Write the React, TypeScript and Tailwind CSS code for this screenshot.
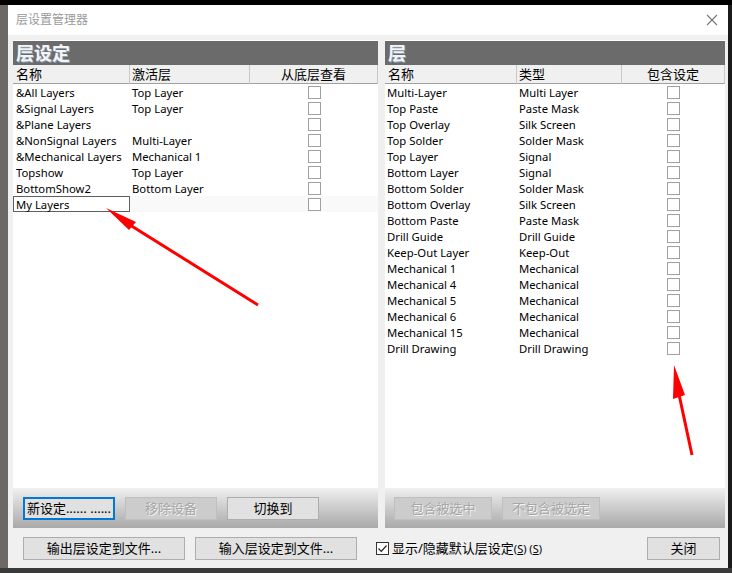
import React from "react";

const leftRows: [string, string][] = [
  ["&All Layers", "Top Layer"],
  ["&Signal Layers", "Top Layer"],
  ["&Plane Layers", ""],
  ["&NonSignal Layers", "Multi-Layer"],
  ["&Mechanical Layers", "Mechanical 1"],
  ["Topshow", "Top Layer"],
  ["BottomShow2", "Bottom Layer"],
];

const rightRows: [string, string][] = [
  ["Multi-Layer", "Multi Layer"],
  ["Top Paste", "Paste Mask"],
  ["Top Overlay", "Silk Screen"],
  ["Top Solder", "Solder Mask"],
  ["Top Layer", "Signal"],
  ["Bottom Layer", "Signal"],
  ["Bottom Solder", "Solder Mask"],
  ["Bottom Overlay", "Silk Screen"],
  ["Bottom Paste", "Paste Mask"],
  ["Drill Guide", "Drill Guide"],
  ["Keep-Out Layer", "Keep-Out"],
  ["Mechanical 1", "Mechanical"],
  ["Mechanical 4", "Mechanical"],
  ["Mechanical 5", "Mechanical"],
  ["Mechanical 6", "Mechanical"],
  ["Mechanical 15", "Mechanical"],
  ["Drill Drawing", "Drill Drawing"],
];

const font = { fontFamily: '"Noto Sans", "Noto Sans CJK SC", sans-serif' };

const Box = () => (
  <div className="w-[13px] h-[13px] border border-[#a0a0a0] bg-white" />
);

const Btn = ({
  label,
  w,
  disabled,
  focused,
}: {
  label: string;
  w: string;
  disabled?: boolean;
  focused?: boolean;
}) => (
  <div
    className={
      "h-[23px] flex items-center justify-center text-[13px] " +
      w +
      (focused
        ? " border-2 border-[#0078d7] bg-[#e1e1e1] text-black"
        : disabled
        ? " border border-[#bfbfbf] bg-[#cccccc] text-[#a6a6a6] [text-shadow:1px_1px_0_#f4f4f4]"
        : " border border-[#adadad] bg-[#e1e1e1] text-black")
    }
  >
    {label}
  </div>
);

const ColHead = ({ cols, grid }: { cols: string[]; grid: string }) => (
  <div
    className={
      "grid h-[19px] bg-[#f0f0f0] border-b border-[#a0a0a0] border-r border-r-[#c8c8c8] text-[13px] leading-[19px] text-black " +
      grid
    }
  >
    <div className="pl-[3px] border-r border-[#c8c8c8] whitespace-nowrap overflow-hidden">{cols[0]}</div>
    <div className="pl-[2px] border-r border-[#c8c8c8] whitespace-nowrap overflow-hidden">{cols[1]}</div>
    <div className="text-center whitespace-nowrap">{cols[2]}</div>
  </div>
);

const App = () => {
  return (
    <div className="relative w-[732px] h-[573px] bg-[#1b1b1b] flex flex-col overflow-hidden" style={font}>
      <div className="h-[5px] bg-black" />
      <div className="flex flex-1">
        <div className="w-[8px] bg-[#6b6865]" />
        {/* dialog */}
        <div className="w-[720px] flex flex-col bg-[#f0f0f0]">
          <div className="h-[30px] bg-white flex items-center justify-between pl-[8px] pr-[10px]">
            <span className="text-[12px] text-[#9a9a9a]">层设置管理器</span>
            <svg width="12" height="12" viewBox="0 0 12 12">
              <path d="M1 1 L11 11 M11 1 L1 11" stroke="#777" strokeWidth="1.1" fill="none" />
            </svg>
          </div>
          <div className="flex pl-[5px] pt-[5px] gap-[7px]">
            {/* left panel */}
            <div className="w-[365px] h-[488px] flex flex-col border-t border-white">
              <div className="h-[24px] bg-[#6b6b6b] text-[#f4f4f4] text-[18px] leading-[25px] pl-[3px] font-semibold [text-shadow:1px_1px_0_#8aa0b8]">
                层设定
              </div>
              <ColHead cols={["名称", "激活层", "从底层查看"]} grid="grid-cols-[117px_120px_1fr]" />
              <div className="flex-1 bg-white text-[11.3px] text-black">
                {leftRows.map(([a, b], i) => (
                  <div key={i} className="grid grid-cols-[117px_120px_1fr] h-[16px] items-center leading-[16px]">
                    <div className="pl-[3px] pt-[1px] whitespace-nowrap">{a}</div>
                    <div className="pl-[2px] pt-[1px] whitespace-nowrap">{b}</div>
                    <div className="flex justify-center">
                      <Box />
                    </div>
                  </div>
                ))}
                <div className="grid grid-cols-[117px_120px_1fr] h-[16px] items-center leading-[15px] bg-[#f9f9f9]">
                  <div className="h-[16px] pl-[2px] border border-[#606060] bg-white whitespace-nowrap">My Layers</div>
                  <div />
                  <div className="flex justify-center">
                    <Box />
                  </div>
                </div>
              </div>
              <div className="h-[40px] bg-gradient-to-b from-[#f0f0f0] to-[#a9a9a9] flex items-center gap-[10px] pl-[10px] pt-[1px]">
                <Btn label="新设定......  ......" w="w-[92px]" focused />
                <Btn label="移除设备" w="w-[92px]" disabled />
                <Btn label="切换到" w="w-[92px]" />
              </div>
            </div>
            {/* right panel */}
            <div className="w-[340px] h-[488px] flex flex-col border-t border-white">
              <div className="h-[24px] bg-[#6b6b6b] text-[#f4f4f4] text-[18px] leading-[25px] pl-[3px] font-semibold [text-shadow:1px_1px_0_#8aa0b8]">
                层
              </div>
              <ColHead cols={["名称", "类型", "包含设定"]} grid="grid-cols-[132px_105px_1fr]" />
              <div className="flex-1 bg-white text-[11.3px] text-black">
                {rightRows.map(([a, b], i) => (
                  <div key={i} className="grid grid-cols-[132px_105px_1fr] h-[16px] items-center leading-[16px]">
                    <div className="pl-[2px] pt-[1px] whitespace-nowrap">{a}</div>
                    <div className="pl-[2px] pt-[1px] whitespace-nowrap">{b}</div>
                    <div className="flex justify-center">
                      <Box />
                    </div>
                  </div>
                ))}
              </div>
              <div className="h-[40px] bg-gradient-to-b from-[#f0f0f0] to-[#a9a9a9] flex items-center gap-[10px] pl-[9px] pt-[1px]">
                <Btn label="包含被选中" w="w-[98px]" disabled />
                <Btn label="不包含被选定" w="w-[98px]" disabled />
              </div>
            </div>
          </div>
          {/* bottom bar */}
          <div className="flex items-center pl-[15px] pt-[9px]">
            <Btn label="输出层设定到文件..." w="w-[162px]" />
            <div className="w-[10px]" />
            <Btn label="输入层设定到文件..." w="w-[162px]" />
            <div className="ml-[19px] flex items-center gap-[3px]">
              <div className="w-[13px] h-[13px] border border-[#333] bg-white flex items-center justify-center">
                <svg width="11" height="11" viewBox="0 0 11 11">
                  <path d="M1.5 5.5 L4.3 8.3 L9.5 2.5" stroke="#222" strokeWidth="1.2" fill="none" />
                </svg>
              </div>
              <span className="text-[13px] text-black">
                显示/隐藏默认层设定
                <span className="text-[11px]">
                  (<u>S</u>) (<u>S</u>)
                </span>
              </span>
            </div>
            <div className="ml-auto mr-[8px]">
              <Btn label="关闭" w="w-[73px]" />
            </div>
          </div>
        </div>
        <div className="w-[4px] bg-[#1b1b1b]" />
      </div>
      <div className="h-[5px] bg-[#3a3a3a]" />
      {/* red annotation arrows */}
      <svg className="absolute left-0 top-0 pointer-events-none" width="732" height="573">
        <line x1="258" y1="305" x2="122" y2="220" stroke="#ff0000" strokeWidth="3" />
        <polygon points="106,208 136,222 129,230" fill="#ff0000" />
        <line x1="692" y1="455" x2="677" y2="385" stroke="#ff0000" strokeWidth="3" />
        <polygon points="674,365 673,399 685,395" fill="#ff0000" />
      </svg>
    </div>
  );
};

export default App;
